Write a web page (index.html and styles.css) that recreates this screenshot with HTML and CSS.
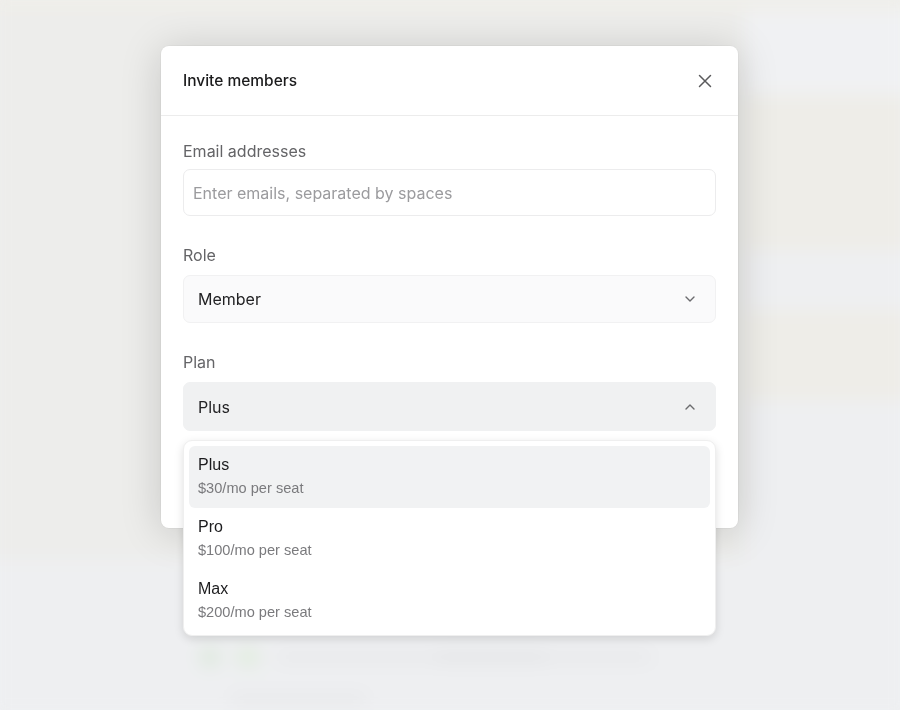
FILE: index.html
```html
<!DOCTYPE html>
<html lang="en">

<head>
    <meta charset="UTF-8">
    <meta name="viewport" content="width=device-width, initial-scale=1.0">
    <title>Invite members</title>
    <link rel="stylesheet" href="styles.css">
</head>

<body>
    <!-- blurred app behind the dialog -->
    <div class="backdrop">
        <div class="bd-top"></div>
        <div class="bd-main">
            <div class="bd-left"></div>
            <div class="bd-right">
                <div class="bd-panel cool"></div>
                <div class="bd-panel warm"></div>
                <div class="bd-panel cool short"></div>
                <div class="bd-panel warm low"></div>
            </div>
        </div>
        <div class="bd-foot">
            <div class="bd-row">
                <span class="dot"></span>
                <span class="dot light"></span>
                <span class="bar"><span class="bar-dark"></span></span>
            </div>
            <div class="bd-row second">
                <span class="bar short"></span>
            </div>
        </div>
    </div>

    <div class="overlay">
        <div class="modal">
            <div class="modal-head">
                <h2>Invite members</h2>
                <button class="close" aria-label="Close">
                    <svg width="14" height="14" viewBox="0 0 14 14">
                        <path d="M1.5 1.5 12.5 12.5M12.5 1.5 1.5 12.5" />
                    </svg>
                </button>
            </div>
            <div class="modal-body">
                <div class="field">
                    <label>Email addresses</label>
                    <input class="input" type="text" placeholder="Enter emails, separated by spaces">
                </div>
                <div class="field">
                    <label>Role</label>
                    <div class="select">
                        <span>Member</span>
                        <svg class="chev" width="10" height="6" viewBox="0 0 10 6">
                            <path d="M1 1 5 5 9 1" />
                        </svg>
                    </div>
                </div>
                <div class="field plan">
                    <label>Plan</label>
                    <div class="select open">
                        <span>Plus</span>
                        <svg class="chev" width="10" height="6" viewBox="0 0 10 6">
                            <path d="M1 5 5 1 9 5" />
                        </svg>
                    </div>
                    <ul class="menu">
                        <li class="active">
                            <span class="name">Plus</span>
                            <span class="price">$30/mo per seat</span>
                        </li>
                        <li>
                            <span class="name">Pro</span>
                            <span class="price">$100/mo per seat</span>
                        </li>
                        <li>
                            <span class="name">Max</span>
                            <span class="price">$200/mo per seat</span>
                        </li>
                    </ul>
                </div>
            </div>
        </div>
    </div>
</body>

</html>
```

FILE: styles.css
```css
* {
    border: 0;
    outline: 0;
    padding: 0;
    margin: 0;
    box-sizing: border-box;
}

body {
    width: 900px;
    height: 710px;
    overflow: hidden;
    background-color: #eeeff0;
    font-family: Inter, "Liberation Sans", sans-serif;
}

/* backdrop */

.backdrop {
    height: 730px;
    margin: -10px;
    filter: blur(9px);
}

.bd-top {
    height: 20px;
    background-color: #efeee9;
}

.bd-main {
    display: grid;
    grid-template-columns: 755px 1fr;
    height: 550px;
}

.bd-left {
    background-color: #ededeb;
}

.bd-right {
    display: flex;
    flex-direction: column;
    background-color: #eeeff1;
}

.bd-panel.cool {
    height: 85px;
    background-color: #f0f1f3;
}

.bd-panel.warm {
    height: 155px;
    background-color: #eeede8;
}

.bd-panel.short {
    height: 60px;
    background-color: #eeeff1;
}

.bd-panel.low {
    height: 90px;
}

.bd-foot {
    height: 160px;
    padding-top: 85px;
    background-color: #eeeff1;
}

.bd-row {
    display: flex;
    align-items: center;
    gap: 16px;
    height: 24px;
    padding-left: 210px;
}

.bd-row.second {
    margin-top: 18px;
    padding-left: 240px;
}

.dot {
    width: 20px;
    height: 20px;
    border-radius: 50%;
    background-color: #dbe8da;
}

.dot.light {
    width: 24px;
    background-color: #e0ecdd;
}

.bar {
    display: flex;
    width: 376px;
    height: 10px;
    padding-left: 160px;
    border-radius: 5px;
    background-color: #e7e8ea;
}

.bar-dark {
    width: 110px;
    border-radius: 5px;
    background-color: #e2e3e5;
}

.bar.short {
    width: 137px;
    padding: 0;
}

/* dialog */

.overlay {
    position: fixed;
    inset: 0;
    display: flex;
    align-items: flex-start;
    padding: 46px 0 0 161px;
}

.modal {
    width: 577px;
    height: 482px;
    background-color: #fff;
    border-radius: 8px;
    box-shadow: 0 0 0 1px rgba(0, 0, 0, 0.03), 0 4px 40px rgba(0, 0, 0, 0.17);
}

.modal-head {
    display: flex;
    align-items: center;
    justify-content: space-between;
    height: 70px;
    padding: 0 26px 0 22px;
    border-bottom: 1px solid #ececec;
}

.modal-head h2 {
    font-size: 15.5px;
    font-weight: 500;
    color: #1b1b1c;
}

.close {
    display: flex;
    background: none;
    cursor: pointer;
}

.close path {
    fill: none;
    stroke: #5a5a5c;
    stroke-width: 1.5;
    stroke-linecap: round;
}

.modal-body {
    display: flex;
    flex-direction: column;
    gap: 27px;
    padding: 23px 22px 0;
}

.field {
    display: flex;
    flex-direction: column;
    gap: 6px;
}

.field label {
    font-size: 16px;
    line-height: 24px;
    color: #646467;
}

.input {
    height: 47px;
    padding: 0 9px;
    border: 1px solid #ececed;
    border-radius: 7px;
    background-color: #fff;
    font-family: inherit;
    font-size: 16px;
    color: #222;
}

.input::placeholder {
    color: #9b9b9e;
}

.select {
    display: flex;
    align-items: center;
    justify-content: space-between;
    height: 48px;
    margin-top: 2px;
    padding: 0 20px 0 14px;
    border: 1px solid #f1f1f2;
    border-radius: 7px;
    background-color: #fafafb;
    font-size: 16px;
    color: #222224;
}

.select.open {
    height: 49px;
    border-color: #f0f1f2;
    background-color: #f0f1f2;
}

.chev path {
    fill: none;
    stroke: #6b6b6e;
    stroke-width: 1.4;
    stroke-linecap: round;
    stroke-linejoin: round;
}

/* dropdown menu */

.plan {
    position: relative;
}

.menu {
    position: absolute;
    top: calc(100% + 9px);
    left: 0;
    right: 0;
    list-style: none;
    padding: 5px 5px 3px;
    border: 1px solid #efefef;
    border-radius: 9px;
    background-color: #fff;
    box-shadow: 0 3px 10px rgba(0, 0, 0, 0.13);
    font-family: "Liberation Sans", Arial, sans-serif;
}

.menu li {
    display: flex;
    flex-direction: column;
    gap: 3px;
    height: 62px;
    padding: 9px 9px 0;
    border-radius: 6px;
}

.menu li.active {
    background-color: #f1f2f3;
}

.menu .name {
    font-size: 16px;
    line-height: 20px;
    color: #1c1c1e;
}

.menu .price {
    font-size: 14.6px;
    line-height: 20px;
    color: #7a7a7d;
}
```
